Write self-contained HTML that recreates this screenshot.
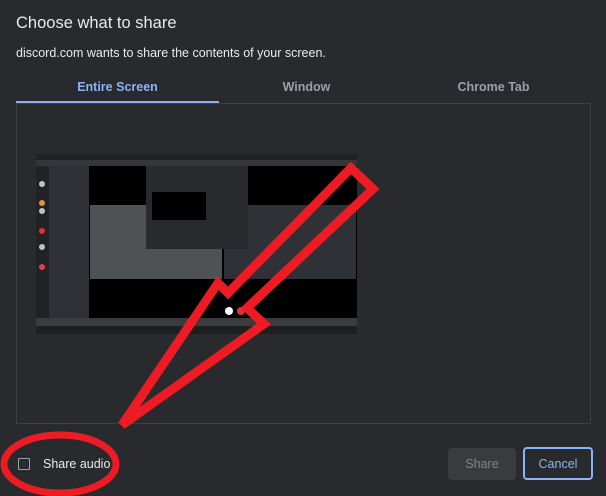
<!DOCTYPE html>
<html><head><meta charset="utf-8"><style>
html,body{margin:0;padding:0;}
body{width:606px;height:496px;background:#292a2d;position:relative;overflow:hidden;font-family:"Liberation Sans",Arial,sans-serif;color:#e8eaed;}
.t{position:absolute;left:16px;top:14px;font-size:16.5px;color:#e8eaed;}
.s{position:absolute;left:16px;top:46px;font-size:12.5px;color:#e8eaed;}
.tab{position:absolute;top:80px;font-size:12.5px;font-weight:bold;color:#9aa0a6;text-align:center;}
.ul{position:absolute;left:16px;top:101px;width:203px;height:2px;background:#8ab4f8;}
.panel{position:absolute;left:16px;top:103px;width:573px;height:319px;border:1px solid #3c4043;}
.cb{position:absolute;left:18px;top:458px;width:10px;height:10px;border:1.5px solid #9aa0a6;border-radius:1px;}
.sa{position:absolute;left:43px;top:457px;font-size:12.5px;color:#e8eaed;}
.btn{position:absolute;box-sizing:border-box;font-size:12.5px;display:flex;align-items:center;justify-content:center;border-radius:4px;}
</style></head><body>
<div class="t">Choose what to share</div>
<div class="s">discord.com wants to share the contents of your screen.</div>
<div class="tab" style="left:16px;width:203px;color:#8ab4f8">Entire Screen</div>
<div class="tab" style="left:210px;width:193px">Window</div>
<div class="tab" style="left:397px;width:193px">Chrome Tab</div>
<div class="panel"></div>
<div class="ul"></div>
<svg style="position:absolute;left:0;top:0" width="606" height="496">
 <rect x="36" y="154" width="321" height="180" fill="#000"/>
 <rect x="36" y="154" width="321" height="6" fill="#202124"/>
 <rect x="36" y="160" width="321" height="6" fill="#35363a"/>
 <rect x="36" y="166" width="13" height="152" fill="#202225"/>
 <rect x="49" y="166" width="40" height="152" fill="#2f3136"/>
 <rect x="90" y="205" width="132" height="74" fill="#4f5254"/>
 <rect x="224" y="205" width="132" height="74" fill="#2f3136"/>
 <rect x="146" y="166" width="102" height="83" fill="#292a2d"/>
 <rect x="152" y="192" width="54" height="28" fill="#000"/>
 <rect x="36" y="318" width="321" height="8" fill="#3a3b3c"/>
 <rect x="36" y="326" width="321" height="8" fill="#1f1f1f"/>
 <g fill="#c0c0c0"><circle cx="42" cy="184" r="3"/><circle cx="42" cy="203" r="3" fill="#e89030"/><circle cx="42" cy="211" r="3"/><circle cx="42" cy="231" r="3" fill="#e03030"/><circle cx="42" cy="247" r="3"/><circle cx="42" cy="267" r="3" fill="#e04040"/><circle cx="229" cy="311" r="4" fill="#fff"/><circle cx="241" cy="311" r="4" fill="#e03030"/></g>
 <polygon points="122,425 218,283 228,293 351,168 373,189 247,308 264,324" fill="none" stroke="#ed1c24" stroke-width="9" stroke-linejoin="miter"/>
</svg>
<div class="cb"></div>
<div class="sa">Share audio</div>
<div class="btn" style="left:448px;top:448px;width:68px;height:32px;background:#3a3b3e;color:#80868b;">Share</div>
<div class="btn" style="left:523px;top:447px;width:70px;height:33px;border:2px solid #8ab4f8;color:#8ab4f8;">Cancel</div>
<svg style="position:absolute;left:0;top:0" width="606" height="496"><ellipse cx="60" cy="464" rx="56" ry="29" fill="none" stroke="#ed1c24" stroke-width="7"/></svg>
</body></html>
